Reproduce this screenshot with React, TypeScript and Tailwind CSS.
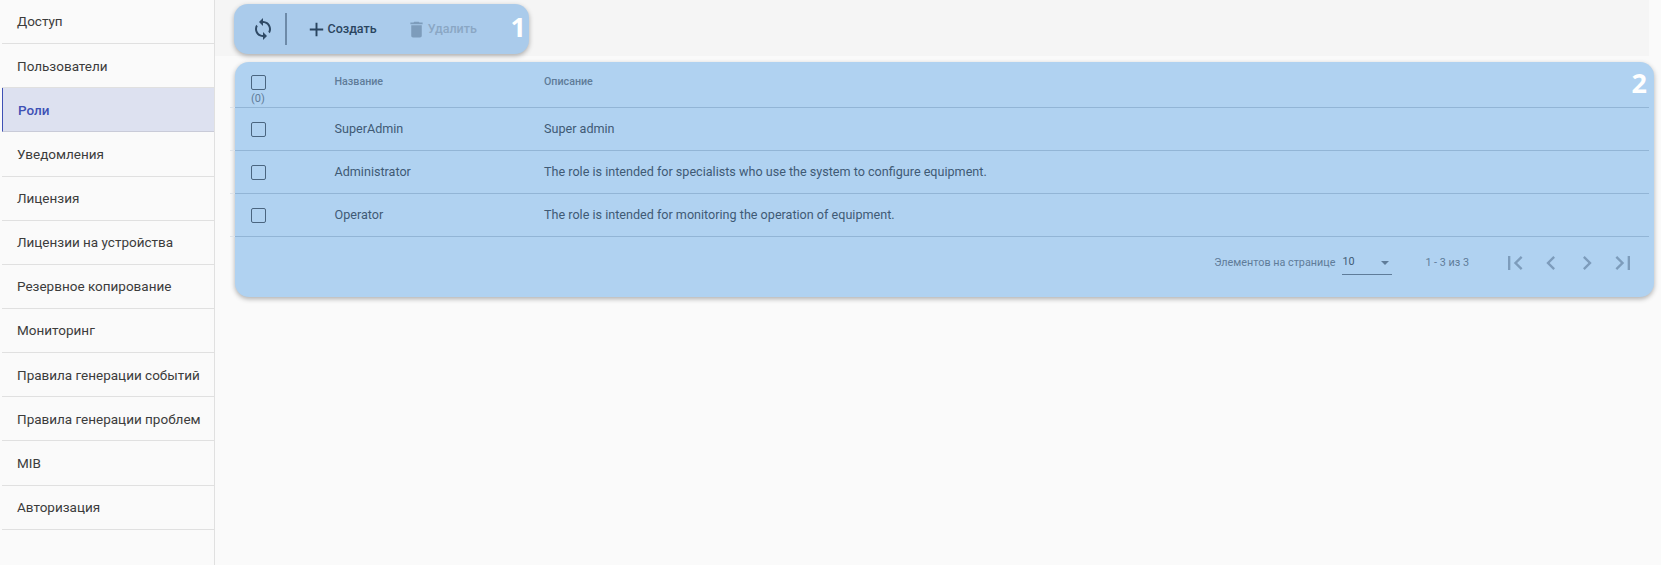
const menu = [
  "Доступ",
  "Пользователи",
  "Роли",
  "Уведомления",
  "Лицензия",
  "Лицензии на устройства",
  "Резервное копирование",
  "Мониторинг",
  "Правила генерации событий",
  "Правила генерации проблем",
  "MIB",
  "Авторизация",
];

const roles = [
  { name: "SuperAdmin", desc: "Super admin" },
  {
    name: "Administrator",
    desc: "The role is intended for specialists who use the system to configure equipment.",
  },
  { name: "Operator", desc: "The role is intended for monitoring the operation of equipment." },
];

function Icon({ d, className }: { d: string; className: string }) {
  return (
    <svg viewBox="0 0 24 24" fill="currentColor" className={className}>
      <path d={d} />
    </svg>
  );
}

const pagerIcons = [
  "M18.41 16.59L13.82 12l4.59-4.59L17 6l-6 6 6 6zM6 6h2v12H6z",
  "M15.41 16.59L10.83 12l4.58-4.59L14 6l-6 6 6 6 1.41-1.41z",
  "M8.59 16.59L13.17 12 8.59 7.41 10 6l6 6-6 6-1.41-1.41z",
  "M5.59 7.41L10.18 12l-4.59 4.59L7 18l6-6-6-6zM16 6h2v12h-2z",
];

function Checkbox() {
  return <div className="h-[15px] w-[15px] rounded-[2px] border-[1.5px] border-[#4a6580]" />;
}

function Sidebar() {
  return (
    <div className="ml-[2px] w-[213px] shrink-0 border-r border-[#e0e0e0]">
      {menu.map((item) => (
        <div
          key={item}
          className={
            item === "Роли"
              ? "flex h-[44.15px] items-center border-b border-l border-[#c9cbd8] border-l-[#3f51b5] bg-[#dde1f0] pl-[15px] text-[13.5px] font-medium text-[#3f51b5]"
              : "flex h-[44.15px] items-center border-b border-[#e0e0e0] pl-[15px] text-[13.5px] text-[#3c3c3c]"
          }
        >
          {item}
        </div>
      ))}
    </div>
  );
}

function Toolbar() {
  return (
    <div className="mr-[12px] h-[56px] bg-[#f5f5f5] pt-[4px] pl-[19px]">
      <div className="relative flex h-[50px] w-[295px] items-center rounded-[14px] bg-[#aacbeb] shadow-[0_2px_5px_rgba(0,0,0,0.3)]">
        <div className="ml-[17px] w-[34px] text-[#2f4a66]">
          <Icon
            className="h-[24px] w-[24px]"
            d="M12 4V1L8 5l4 4V6c3.31 0 6 2.69 6 6 0 1.01-.25 1.97-.7 2.8l1.46 1.46C19.54 15.03 20 13.57 20 12c0-4.42-3.58-8-8-8zm0 14c-3.31 0-6-2.69-6-6 0-1.01.25-1.97.7-2.8L5.24 7.74C4.46 8.97 4 10.43 4 12c0 4.42 3.58 8 8 8v3l4-4-4-4v3z"
          />
        </div>
        <div className="h-[32px] w-[1.5px] bg-[#6d8aa8]" />
        <div className="ml-[18px] flex items-center text-[#2a4560]">
          <Icon className="h-[23px] w-[23px]" d="M19 13h-6v6h-2v-6H5v-2h6V5h2v6h6v2z" />
          <span className="text-[12.5px] font-medium">Создать</span>
        </div>
        <div className="ml-[29px] flex items-center text-[#8aa7c4]">
          <Icon
            className="h-[21px] w-[21px] text-[#7d9cbb]"
            d="M6 19c0 1.1.9 2 2 2h8c1.1 0 2-.9 2-2V7H6v12zM19 4h-3.5l-1-1h-5l-1 1H5v2h14V4z"
          />
          <span className="ml-[1px] text-[12.5px] font-medium">Удалить</span>
        </div>
        <span className="absolute top-[6px] right-[3px] font-['Open_Sans'] text-[27px] leading-[33px] font-bold text-white">
          1
        </span>
      </div>
    </div>
  );
}

function RoleTable() {
  return (
    <div className="relative mt-[6px] ml-[20px] flex h-[235px] w-[1419px] flex-col rounded-[14px] bg-[#b0d2f1] shadow-[0_2px_5px_rgba(0,0,0,0.3)]">
      <span className="absolute top-[4px] right-[7px] font-['Open_Sans'] text-[27px] leading-[33px] font-bold text-white">
        2
      </span>
      <div className="relative mr-[5px] flex h-[46px] border-b border-[#92b5d6] pt-[13px] pl-[16px] before:absolute before:bottom-[-1px] before:-left-[5px] before:h-[1px] before:w-[5px] before:bg-[#dfe3e8]">
        <div className="w-[83.5px]">
          <Checkbox />
          <div className="mt-[2px] text-[11px] leading-[14px] text-[#5f7c99]">(0)</div>
        </div>
        <div className="w-[209.5px] text-[10.7px] leading-[13px] font-medium text-[#5f7c99]">Название</div>
        <div className="text-[10.7px] leading-[13px] font-medium text-[#5f7c99]">Описание</div>
      </div>
      {roles.map((role) => (
        <div
          key={role.name}
          className="relative mr-[5px] flex h-[43px] items-center border-b border-[#92b5d6] pl-[16px] text-[12.6px] text-[#3f5a75] before:absolute before:bottom-[-1px] before:-left-[5px] before:h-[1px] before:w-[5px] before:bg-[#dfe3e8]"
        >
          <div className="w-[83.5px]">
            <Checkbox />
          </div>
          <div className="w-[209.5px]">{role.name}</div>
          <div>{role.desc}</div>
        </div>
      ))}
      <div className="flex flex-1 items-center justify-end pr-[17px] pb-[8px] text-[10.8px] text-[#5f7c99]">
        <span>Элементов на странице</span>
        <div className="ml-[7px] flex h-[24px] w-[50px] items-center justify-between border-b border-[#5f7c99] pr-[3px] text-[#3f5a75]">
          <span>10</span>
          <div className="h-0 w-0 border-x-[4px] border-t-[4px] border-x-transparent border-t-[#5f7c99]" />
        </div>
        <span className="mr-[32px] ml-[33px]">1 - 3 из 3</span>
        <div className="flex gap-[8px] text-[#7d9cbb]">
          {pagerIcons.map((d) => (
            <Icon key={d} className="h-[28px] w-[28px]" d={d} />
          ))}
        </div>
      </div>
    </div>
  );
}

export default function App() {
  return (
    <div className="flex min-h-[565px] bg-[#fafafa] font-['Roboto',sans-serif]">
      <Sidebar />
      <div className="min-w-0 flex-1">
        <Toolbar />
        <RoleTable />
      </div>
    </div>
  );
}
